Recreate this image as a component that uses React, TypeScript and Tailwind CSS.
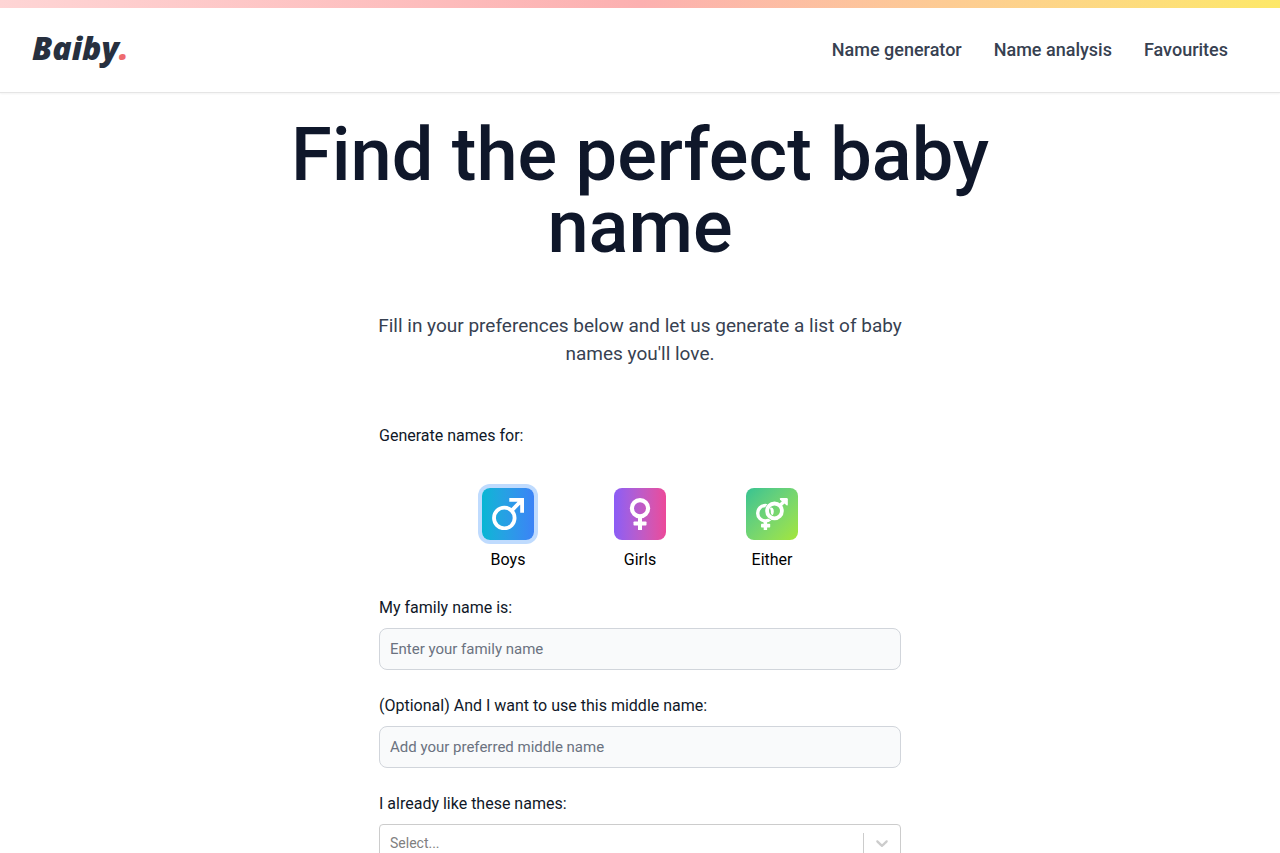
import { useState } from "react";
import type { ReactNode } from "react";

const navLinks = ["Name generator", "Name analysis", "Favourites"];

function MaleIcon() {
  return (
    <svg viewBox="0 0 32 32" className="size-8" fill="none" stroke="currentColor" strokeWidth="3.8" aria-hidden="true">
      <circle cx="12.3" cy="20" r="10.3" />
      <path d="M17.3 1.9H30.1V14.7M29.6 2.4L19.4 12.8" />
    </svg>
  );
}

function FemaleIcon() {
  return (
    <svg viewBox="0 0 32 32" className="size-8" fill="none" stroke="currentColor" aria-hidden="true">
      <circle cx="16" cy="10.2" r="8.1" strokeWidth="4.2" />
      <path d="M16 18V32" strokeWidth="4" />
      <rect x="9.5" y="23.4" width="13" height="4.2" rx="0.8" fill="currentColor" stroke="none" />
    </svg>
  );
}

function EitherIcon() {
  return (
    <svg viewBox="0 0 32 32" className="size-8" fill="none" stroke="currentColor" aria-hidden="true">
      <mask id="ring-gap" maskUnits="userSpaceOnUse" x="0" y="0" width="32" height="34">
        <rect width="32" height="34" fill="white" stroke="none" />
        <circle cx="18.5" cy="13" r="9.9" fill="black" stroke="none" />
      </mask>
      <circle cx="9.4" cy="15.2" r="7.7" strokeWidth="3.4" mask="url(#ring-gap)" />
      <circle cx="18.5" cy="12.9" r="7.4" strokeWidth="3.8" />
      <path d="M14.6 9.3Q17.8 9.6 17.8 13.2Q17.8 15.6 16.8 17.2Q14.6 16.4 14.8 14Q14.9 12 14 10.8Z" fill="currentColor" stroke="none" />
      <path d="M9.4 23V32" strokeWidth="3.4" />
      <rect x="5" y="25.8" width="9.2" height="3.6" rx="0.7" fill="currentColor" stroke="none" />
      <path d="M23.5 8L28.5 3" strokeWidth="3.4" />
      <path d="M24.6 0H30.6Q31.8 0 31.8 1.2V6.6Q31.8 8.2 30.5 7.2L24 1.8Q23.2 0.2 24.6 0Z" fill="currentColor" stroke="none" />
    </svg>
  );
}

const genders: { label: string; background: string; icon: ReactNode }[] = [
  { label: "Boys", background: "bg-linear-to-r from-[#06b6d4] to-[#3b82f6]", icon: <MaleIcon /> },
  { label: "Girls", background: "bg-linear-to-r from-[#8b5cf6] to-[#ec4899]", icon: <FemaleIcon /> },
  { label: "Either", background: "bg-linear-to-br from-[#34c391] to-[#a3e635]", icon: <EitherIcon /> },
];

function TextField({ id, label, placeholder }: { id: string; label: string; placeholder: string }) {
  return (
    <div>
      <label htmlFor={id} className="mb-2 block text-base text-gray-900">{label}</label>
      <input
        id={id}
        type="text"
        placeholder={placeholder}
        className="block w-full rounded-lg border border-[#d1d5db] bg-[#f9fafb] p-2.5 text-[15px] leading-5 text-gray-900 placeholder:text-[#6b7280]"
      />
    </div>
  );
}

export default function App() {
  const [gender, setGender] = useState("Boys");

  return (
    <div className="min-h-screen bg-white font-[Roboto,sans-serif] text-black">
      <div className="h-2 bg-linear-to-r from-[#fed5d5] via-[#fcb0b0] to-[#fde868]" />
      <header className="flex h-[85px] items-center justify-between border-b border-[#e5e5e5] pr-[52px] pl-8 shadow-xs">
        <a href="#" className="pb-1 font-['Open_Sans',sans-serif] text-[32px] leading-10 font-extrabold text-[#27303f] italic">
          Baiby<span className="text-[#ee6a6f]">.</span>
        </a>
        <nav className="flex gap-8">
          {navLinks.map((link) => (
            <a key={link} href="#" className="text-lg font-medium text-[#374151]">{link}</a>
          ))}
        </nav>
      </header>

      <main className="flex flex-col items-center px-4 pt-[26px] pb-16">
        <h1 className="max-w-3xl text-center text-[74px] leading-[72px] font-medium text-[#0f172a]">
          Find the perfect baby name
        </h1>
        <p className="mt-[49px] max-w-[540px] text-center text-[19px] leading-7 text-[#374151]">
          Fill in your preferences below and let us generate a list of baby names you'll love.
        </p>

        <form className="mt-14 flex w-full max-w-[522px] flex-col gap-6">
          <fieldset>
            <legend className="text-base text-gray-900">Generate names for:</legend>
            <div className="mt-10 flex justify-center gap-20">
              {genders.map(({ label, background, icon }) => (
                <div key={label} className="flex w-[52px] flex-col items-center gap-2">
                  <button
                    type="button"
                    aria-label={label}
                    aria-pressed={gender === label}
                    onClick={() => setGender(label)}
                    className={`flex size-[52px] items-center justify-center rounded-lg text-white ${background} ${gender === label ? "ring-4 ring-[#bfdbfe]" : ""}`}
                  >
                    {icon}
                  </button>
                  <span className="text-base">{label}</span>
                </div>
              ))}
            </div>
          </fieldset>

          <TextField id="family-name" label="My family name is:" placeholder="Enter your family name" />
          <TextField id="middle-name" label="(Optional) And I want to use this middle name:" placeholder="Add your preferred middle name" />

          <div>
            <label htmlFor="liked-names" className="mb-2 block text-base text-gray-900">I already like these names:</label>
            <div className="flex h-[38px] items-center rounded-sm border border-[#cccccc] bg-white">
              <select id="liked-names" defaultValue="" className="h-full min-w-0 flex-1 appearance-none bg-transparent px-2.5 text-sm text-[#808080]">
                <option value="">Select...</option>
              </select>
              <span className="my-2 w-px self-stretch bg-[#cccccc]" />
              <svg viewBox="0 0 20 20" className="mx-2 size-5 fill-[#cccccc]" aria-hidden="true">
                <path d="M4.516 7.548c0.436-0.446 1.043-0.481 1.576 0l3.908 3.747 3.908-3.747c0.533-0.481 1.141-0.446 1.574 0 0.436 0.445 0.408 1.197 0 1.615-0.406 0.418-4.695 4.502-4.695 4.502-0.217 0.223-0.502 0.335-0.787 0.335s-0.57-0.112-0.789-0.335c0 0-4.287-4.084-4.695-4.502s-0.436-1.17 0-1.615z" />
              </svg>
            </div>
          </div>
        </form>
      </main>
    </div>
  );
}
